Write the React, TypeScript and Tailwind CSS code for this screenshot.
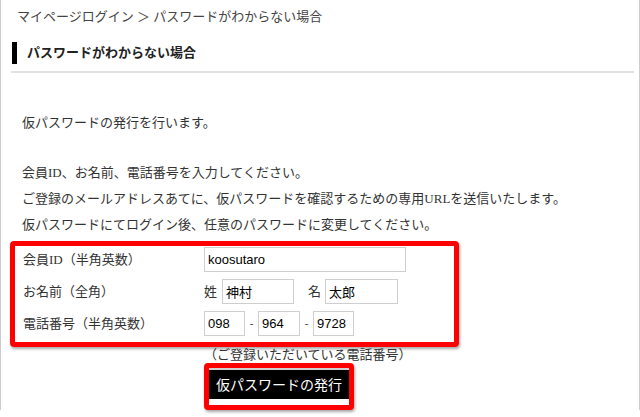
import React from "react";

const serif = { fontFamily: '"Liberation Serif", "Noto Sans CJK JP", serif' };

function Field({ w, value }: { w: string; value: string }) {
  return (
    <input
      readOnly
      defaultValue={value}
      className={`${w} h-[25px] border border-[#cfcfcf] bg-white pl-[3px] text-[13px] text-black outline-none font-['Liberation_Sans','Noto_Sans_CJK_JP',sans-serif]`}
    />
  );
}

export default function App() {
  return (
    <div className="w-[640px] h-[417px] bg-white overflow-hidden">
      <div
        className="w-[640px] h-[410px] border-x border-[#cccccc] text-[#333] text-[13px]"
        style={serif}
      >
        <div className="h-[34px] leading-[34px] pl-[16px] text-[#444]">
          マイページログイン ＞ パスワードがわからない場合
        </div>
        <div className="mt-[8px] ml-[11px] h-[22px] flex items-center">
          <div className="w-[5px] h-[22px] bg-black" />
          <div className="ml-[10px] font-bold text-[#222]">パスワードがわからない場合</div>
        </div>
        <div className="mt-[7px] ml-[10px] w-[623px] h-[2px] bg-[#e2e2e2]" />

        <div className="mt-[37px] pl-[21px] leading-[26px]">
          <p>仮パスワードの発行を行います。</p>
          <p className="mt-[24px]">会員ID、お名前、電話番号を入力してください。</p>
          <p>ご登録のメールアドレスあてに、仮パスワードを確認するための専用URLを送信いたします。</p>
          <p>仮パスワードにてログイン後、任意のパスワードに変更してください。</p>
        </div>

        <div className="mt-[3px] ml-[9px] w-[449px] h-[106px] border-[5px] border-[#ff0000] rounded-[4px] shadow-[1px_2px_3px_rgba(0,0,0,0.35)] pt-[1px] flex flex-col gap-[7px]">
          <div className="flex items-center h-[25px]">
            <div className="w-[189px] pl-[8px]">会員ID（半角英数）</div>
            <Field w="w-[202px]" value="koosutaro" />
          </div>
          <div className="flex items-center h-[25px]">
            <div className="w-[189px] pl-[8px]">お名前（全角）</div>
            <span className="w-[18px]">姓</span>
            <Field w="w-[72px]" value="神村" />
            <span className="ml-[14px] w-[17px]">名</span>
            <Field w="w-[73px]" value="太郎" />
          </div>
          <div className="flex items-center h-[25px]">
            <div className="w-[189px] pl-[8px]">電話番号（半角英数）</div>
            <Field w="w-[41px]" value="098" />
            <span className="w-[13px] text-center text-[11px]">-</span>
            <Field w="w-[42px]" value="964" />
            <span className="w-[13px] text-center text-[11px]">-</span>
            <Field w="w-[41px]" value="9728" />
          </div>
        </div>

        <div className="ml-[203px] h-[16px] leading-[16px] text-[13px]">（ご登録いただいている電話番号）</div>

        <div className="ml-[203px] w-[150px] h-[47px] border-[5px] border-[#ff0000] rounded-[4px] shadow-[1px_2px_3px_rgba(0,0,0,0.35)] bg-white flex flex-col">
          <div className="h-[2px] bg-[#cfcfcf]" />
          <div className="h-[29px] bg-black text-white text-[14px] flex items-center justify-center font-['Noto_Sans_CJK_JP',sans-serif]">
            仮パスワードの発行
          </div>
        </div>
      </div>
    </div>
  );
}
